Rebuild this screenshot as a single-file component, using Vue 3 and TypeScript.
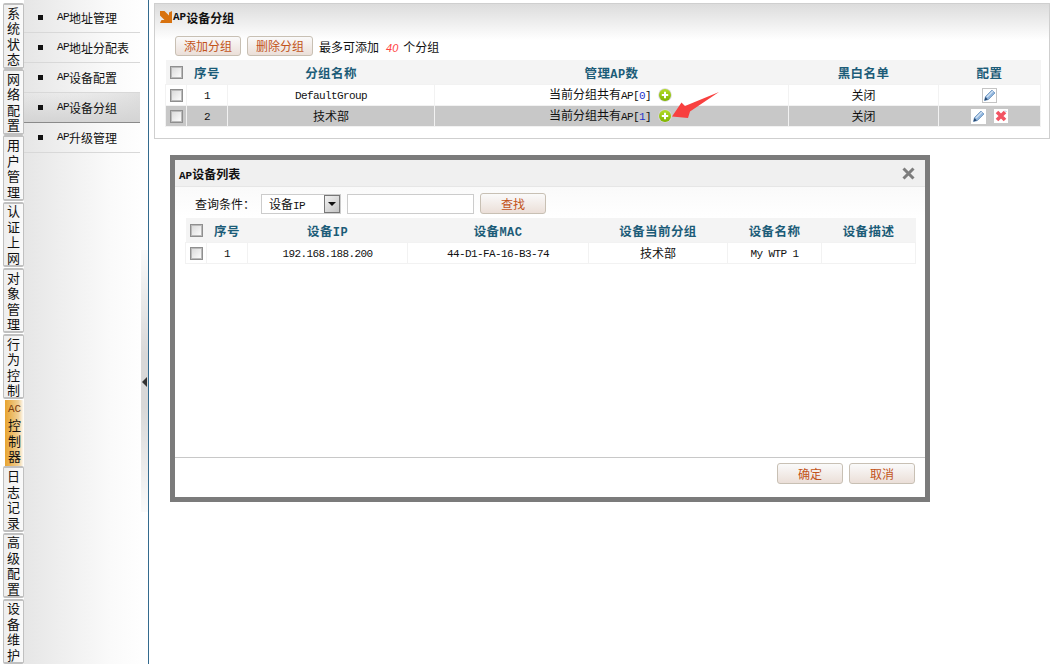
<script setup lang="ts">
const tabs: { t: string[]; active?: boolean }[] = [
  { t: ['系', '统', '状', '态'] },
  { t: ['网', '络', '配', '置'] },
  { t: ['用', '户', '管', '理'] },
  { t: ['认', '证', '上', '网'] },
  { t: ['对', '象', '管', '理'] },
  { t: ['行', '为', '控', '制'] },
  { t: ['AC', '控', '制', '器'], active: true },
  { t: ['日', '志', '记', '录'] },
  { t: ['高', '级', '配', '置'] },
  { t: ['设', '备', '维', '护'] },
]
const menu = [
  { t: '地址管理' },
  { t: '地址分配表' },
  { t: '设备配置' },
  { t: '设备分组', active: true },
  { t: '升级管理' },
]
const groups = [
  { id: 1, name: 'DefaultGroup', latin: true, count: 0, status: '关闭', del: false },
  { id: 2, name: '技术部', latin: false, count: 1, status: '关闭', del: true },
]
</script>

<template>
  <div class="page">
    <nav class="tabs">
      <div v-for="tab in tabs" :key="tab.t.join('')" class="tab" :class="{ on: tab.active }">
        <span v-for="c in tab.t" :key="c" :class="{ acl: c === 'AC' }">{{ c }}</span>
      </div>
    </nav>

    <aside class="side">
      <ul class="menu">
        <li v-for="m in menu" :key="m.t" :class="{ on: m.active }">
          <i class="dot"></i><span class="la">AP</span>{{ m.t }}
        </li>
      </ul>
      <div class="strip"><div class="handle"><i class="tri"></i></div></div>
    </aside>

    <main class="main">
      <section class="panel">
        <h2 class="ptitle">
          <svg class="picon" width="12" height="12" viewBox="0 0 12 12"><path d="M0 0h4.500L9 4.500V1.500L12 0v12H0l1.500-3h3L0 4.500z" fill="#d8720f"/></svg>
          <span class="lab">AP</span>设备分组
        </h2>
        <div class="tools">
          <button class="btn">添加分组</button>
          <button class="btn">删除分组</button>
          <span class="hint">最多可添加<em>40</em>个分组</span>
        </div>
        <table class="tbl t1">
          <colgroup><col class="a1" /><col class="a2" /><col class="a3" /><col class="a4" /><col class="a5" /><col class="a6" /></colgroup>
          <thead>
            <tr>
              <th><input type="checkbox" class="cb" /></th>
              <th>序号</th><th>分组名称</th><th>管理<span class="lab">AP</span>数</th><th>黑白名单</th><th>配置</th>
            </tr>
          </thead>
          <tbody>
            <tr v-for="g in groups" :key="g.id" :class="{ sel: g.del }">
              <td><input type="checkbox" class="cb" /></td>
              <td><span class="la">{{ g.id }}</span></td>
              <td><span v-if="g.latin" class="la">{{ g.name }}</span><template v-else>{{ g.name }}</template></td>
              <td class="count-cell">
                <span class="cnt">当前分组共有<span class="la">AP[</span><span class="la blue">{{ g.count }}</span><span class="la">]</span></span>
                <svg class="plus" width="14" height="14" viewBox="0 0 14 14">
                  <defs>
                    <linearGradient :id="'pg' + g.id" x1="0" y1="0" x2="0" y2="1">
                      <stop offset="0" stop-color="#b4dc28" />
                      <stop offset="1" stop-color="#7fb400" />
                    </linearGradient>
                  </defs>
                  <circle cx="7" cy="7" r="6.800" fill="#d8d8d8"/>
                  <circle cx="7" cy="7" r="6" :fill="'url(#pg' + g.id + ')'"/>
                  <path d="M7 3.800v6.400M3.800 7h6.400" stroke="#fff" stroke-width="2"/>
                </svg>
              </td>
              <td>{{ g.status }}</td>
              <td>
                <span class="acts">
                  <svg class="ic" width="15" height="15" viewBox="0 0 15 15">
                    <rect x=".5" y=".5" width="14" height="14" fill="#fff" :stroke="g.del ? '#fff' : '#c4c4c4'"/>
                    <path d="M2.500 12.500l1-4 6.500-6.500 3 3-6.500 6.500z" fill="#8fb4dc" stroke="#5c88b8" stroke-width=".7"/>
                    <path d="M4.500 8.500l6-6 1 1-6 6z" fill="#cfe0f2"/>
                    <path d="M2.500 12.500l.9-3.400 2.500 2.500z" fill="#27476e"/>
                  </svg>
                  <svg v-if="g.del" class="ic" width="14" height="14" viewBox="0 0 14 14">
                    <rect width="14" height="14" fill="#fff"/>
                    <path d="M3 3l8 8M11 3l-8 8" stroke="#f25463" stroke-width="3.600"/>
                    <path d="M11 1.500l1.500 1.500" stroke="#9dbbe0" stroke-width="1"/>
                  </svg>
                </span>
              </td>
            </tr>
          </tbody>
        </table>
      </section>

      <svg class="arrow" width="60" height="36" viewBox="0 0 60 36">
        <path d="M11 25.500L20.500 11.500 24 15 58 1 29 20.500 27 27z" fill="#f8403f"/>
      </svg>

      <section class="dialog">
        <header class="dhead">
          <h3><span class="lab">AP</span>设备列表</h3>
          <svg width="13" height="13" viewBox="0 0 13 13"><path d="M1.500 1.500l10 10M11.500 1.500l-10 10" stroke="#7d7d7d" stroke-width="3"/></svg>
        </header>
        <div class="dbody">
          <div class="query">
            <label class="qlabel">查询条件：</label>
            <div class="sel-box">
              <span>设备<span class="la">IP</span></span>
              <i class="drop"><b></b></i>
            </div>
            <input class="text" type="text" />
            <button class="btn wide">查找</button>
          </div>
          <table class="tbl t2">
            <colgroup><col class="b1" /><col class="b2" /><col class="b3" /><col class="b4" /><col class="b5" /><col class="b6" /><col class="b7" /></colgroup>
            <thead>
              <tr>
                <th><input type="checkbox" class="cb" /></th>
                <th>序号</th><th>设备<span class="lab">IP</span></th><th>设备<span class="lab">MAC</span></th><th>设备当前分组</th><th>设备名称</th><th>设备描述</th>
              </tr>
            </thead>
            <tbody>
              <tr>
                <td><input type="checkbox" class="cb" /></td>
                <td><span class="la">1</span></td>
                <td><span class="la">192.168.188.200</span></td>
                <td><span class="la">44-D1-FA-16-B3-74</span></td>
                <td>技术部</td>
                <td><span class="la">My WTP 1</span></td>
                <td></td>
              </tr>
            </tbody>
          </table>
        </div>
        <footer class="dfoot">
          <button class="btn wide">确定</button>
          <button class="btn wide">取消</button>
        </footer>
      </section>
    </main>
  </div>
</template>

<style scoped>
.page {
  position: relative;
  display: flex;
  width: 1054px;
  height: 664px;
  overflow: hidden;
  background: #fff;
  color: #111;
  font: 12px "Noto Sans CJK SC", "Liberation Sans", sans-serif;
}
.la { font-family: "Liberation Mono", monospace; font-size: 11px; letter-spacing: -.6px; }
.lab { font-family: "Liberation Mono", monospace; font-size: 11px; font-weight: 700; }
th .lab { font-size: 12px; }
.blue { color: #2233cc; }

.tabs { width: 24px; flex: none; padding: 3px 0 0 3px; box-sizing: border-box; background: #fff; }
.tab {
  box-sizing: border-box;
  width: 21px;
  height: 65.500px;
  margin-bottom: .7px;
  display: flex;
  flex-direction: column;
  align-items: center;
  justify-content: center;
  font-size: 13px;
  line-height: 15.500px;
  background: linear-gradient(to right, #eee, #fafafa);
  border: 1px solid #c0c0c0;
  border-top-width: 2px;
  border-bottom-width: 2px;
  border-radius: 2px;
}
.tab.on { background: linear-gradient(to right, #e8a430, #f0cf94 70%, #fff); border: 0; border-left: 2px solid #fff; }
.acl { font-family: "Liberation Mono", monospace; font-size: 11px; color: #7a3c10; }

.side {
  box-sizing: border-box;
  width: 125px;
  flex: none;
  display: flex;
  background: linear-gradient(to right, #e6e6e6, #fafafa 70%, #fff);
  border-right: 1px solid #336a8e;
}
.menu { list-style: none; margin: 0; padding: 3px 0 0; width: 116px; flex: none; }
.menu li {
  display: flex;
  align-items: center;
  height: 29px;
  border-bottom: 1px solid #d8d8d8;
  padding-left: 33px;
  line-height: 1;
}
.menu li.on {
  background: linear-gradient(to bottom, transparent, #d4d4d4), linear-gradient(to right, transparent, #e0e0e0);
  border-bottom: 1px solid #8a8a8a;
}
.dot { width: 5px; height: 5px; background: #111; margin: 0 14px 0 -19px; flex: none; }
.strip { flex: 1; padding-top: 250px; }
.handle {
  position: relative;
  width: 7px;
  height: 262px;
  margin-left: 1px;
  background: linear-gradient(to bottom, #fafafa, #d8d8d8 40%, #d8d8d8 60%, #fafafa);
}
.tri {
  position: absolute;
  top: 127px;
  left: 1px;
  border: 5px solid transparent;
  border-right: 5px solid #333;
  border-left: 0;
}

.main { flex: 1; min-width: 0; padding: 3px 4px 0 5px; }
.panel {
  box-sizing: border-box;
  height: 136px;
  border: 1px solid #cfcfcf;
  background: linear-gradient(to bottom, #dcdcdc, #fff 36px);
  padding: 0 10px;
}
.ptitle {
  display: flex;
  align-items: center;
  margin: 0 0 6px -5px;
  height: 26px;
  font-size: 12px;
  font-weight: 700;
  color: #111;
}
.picon { margin-right: 1px; }
.tools { display: flex; align-items: center; gap: 6px; height: 20px; padding-left: 10px; }
.btn {
  box-sizing: border-box;
  width: 66px;
  height: 20px;
  padding: 0;
  border: 1px solid #c8c0b4;
  border-radius: 3px;
  background: linear-gradient(to bottom, #fafafa, #ebdfd8);
  color: #c2531a;
  font: 12px "Noto Sans CJK SC", sans-serif;
  line-height: 1;
}
.wide { width: 66px; height: 21px; }
.hint { color: #111; }
.hint em { color: #f44; font-family: "Liberation Sans", sans-serif; font-size: 11px; margin: 0 5px 0 7px; }

.tbl { border-collapse: collapse; table-layout: fixed; text-align: center; }
.t1 { width: 875px; margin-top: 4px; }
.t2 { width: 730px; }
.tbl th {
  height: 24px;
  padding: 0;
  background: #f4f4f4;
  color: #1c5c78;
  font-size: 12.500px;
  font-weight: 700;
  letter-spacing: .4px;
}
.tbl td {
  padding: 0;
  height: 20px;
  background: #fff;
  border: 1px solid #f2f2f2;
  line-height: 1;
}
.tbl td.count-cell { padding-right: 2px; }
.tbl tr.sel td { background: #c8c8c8; }
.a1 { width: 21px; } .a2 { width: 41px; } .a3 { width: 207px; } .a4 { width: 354px; } .a5 { width: 150px; } .a6 { width: 102px; }
.b1 { width: 21px; } .b2 { width: 41px; } .b3 { width: 160px; } .b4 { width: 181px; } .b5 { width: 139px; } .b6 { width: 94px; } .b7 { width: 94px; }
.cb {
  appearance: none;
  display: block;
  box-sizing: border-box;
  width: 13px;
  height: 13px;
  margin: 0 auto;
  border: 1px solid #8f8f8f;
  outline: 1px solid #bbb;
  outline-offset: -2px;
  background: linear-gradient(135deg, #d8d8d8, #fff);
}
.cnt { margin-right: 7px; vertical-align: middle; }
.plus { vertical-align: middle; }
.acts { display: inline-flex; gap: 8px; align-items: center; vertical-align: middle; }
.ic { display: block; }

.arrow { position: absolute; left: 661px; top: 91px; }

.dialog {
  position: absolute;
  left: 170px;
  top: 155px;
  width: 760px;
  height: 347px;
  box-sizing: border-box;
  border: 5px solid #7b7b7b;
  display: flex;
  flex-direction: column;
  background: #fff;
}
.dhead {
  flex: none;
  height: 27px;
  box-sizing: border-box;
  display: flex;
  align-items: center;
  justify-content: space-between;
  padding: 0 10px 0 4px;
  background: #f0f0f0;
  border-bottom: 1px solid #e6e6e6;
}
.dhead h3 { margin: 0; font-size: 12px; font-weight: 700; }
.dbody { flex: 1; padding: 6px 10px 0; background: linear-gradient(to bottom, #fafafa, #fff 30px); }
.query { display: flex; align-items: center; height: 21px; margin-bottom: 4px; }
.qlabel { margin-left: 10px; width: 66px; }
.sel-box {
  box-sizing: border-box;
  width: 80px;
  height: 20px;
  display: flex;
  align-items: center;
  justify-content: space-between;
  padding: 0 0 0 7px;
  background: #fff;
  border: 1px solid #ccc;
}
.drop {
  box-sizing: border-box;
  width: 16px;
  height: 18px;
  display: flex;
  align-items: center;
  justify-content: center;
  background: linear-gradient(135deg, #f2f2f2, #c4c4c4);
  border: 1px solid #777;
}
.drop b { border: 4px solid transparent; border-top: 4px solid #111; border-bottom: 0; }
.text {
  box-sizing: border-box;
  width: 127px;
  height: 20px;
  margin: 0 6px;
  border: 1px solid #ccc;
  background: #fff;
}
.dfoot {
  flex: none;
  height: 40px;
  box-sizing: border-box;
  border-top: 1px solid #c8c8c8;
  display: flex;
  justify-content: flex-end;
  gap: 6px;
  padding: 5px 10px 0 0;
}
</style>

<style>
html, body { margin: 0; background: #fff; }
</style>
